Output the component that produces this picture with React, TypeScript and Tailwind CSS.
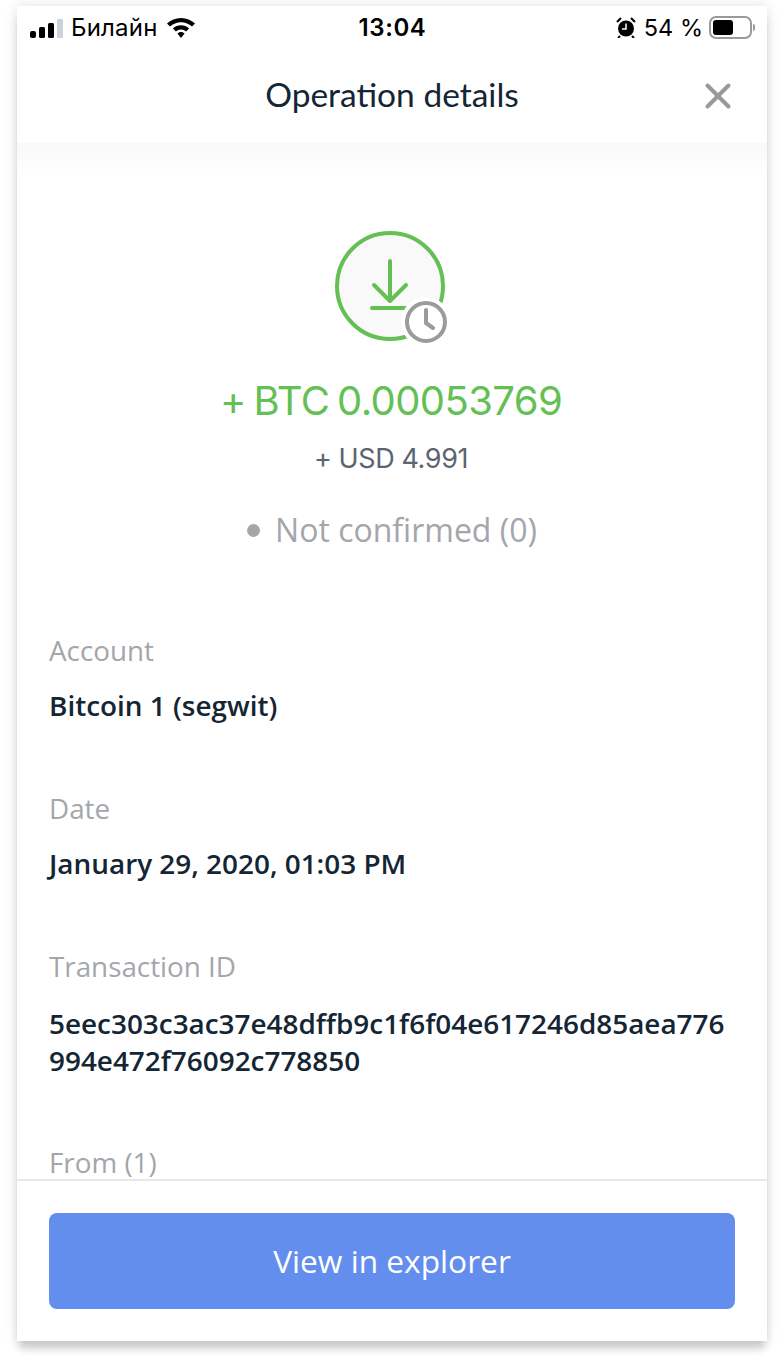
import { X } from "lucide-react";

const font = "font-['Open_Sans',sans-serif]";

function StatusBar() {
  return (
    <div className="flex h-[41px] items-center justify-between pl-[13px] pr-[12px] pt-[2px] font-['Inter',sans-serif] text-black">
      <div className="flex w-[240px] items-center">
        {/* signal */}
        <svg width="33" height="20" viewBox="0 0 33 20" className="mr-[8px]">
          <rect x="0" y="13" width="6" height="7" rx="2" fill="#000" />
          <rect x="9" y="9" width="6" height="11" rx="1.5" fill="#000" />
          <rect x="18" y="5" width="6" height="15" rx="1.5" fill="#000" />
          <rect x="27" y="1" width="6" height="19" rx="1" fill="#ccd2dc" />
        </svg>
        <span className="text-[24px] leading-none tracking-[0.2px]">Билайн</span>
        {/* wifi */}
        <svg width="30" height="23" viewBox="0 0 30 23" className="ml-[8px]">
          <path d="M15 2C9.5 2 4.700 4.100 1 7.600l3 3C7 7.900 10.800 6.300 15 6.300s8 1.600 11 4.300l3-3C25.300 4.100 20.500 2 15 2z" fill="#000" />
          <path d="M15 9.300c-3.100 0-6 1.200-8.100 3.200l3 3c1.300-1.200 3.100-2 5.100-2s3.800.8 5.100 2l3-3C21 10.500 18.100 9.300 15 9.300z" fill="#000" />
          <path d="M15 16c-1.400 0-2.700.6-3.600 1.500L15 22l3.600-4.500C17.700 16.600 16.400 16 15 16z" fill="#000" />
        </svg>
      </div>
      <span className="text-[24px] font-semibold leading-none tracking-[0.6px]">13:04</span>
      <div className="flex w-[240px] items-center justify-end">
        {/* alarm */}
        <svg width="20" height="21" viewBox="0 0 20 21" className="mr-[8px]">
          <circle cx="10" cy="11.500" r="8" fill="#000" />
          <path d="M10 6.500v5.500H6" stroke="#fff" strokeWidth="1.500" fill="none" />
          <path d="M1 5l4-4M19 5l-4-4M4 19l-2 2M16 19l2 2" stroke="#000" strokeWidth="2" />
        </svg>
        <span className="text-[23.5px] leading-none">54 %</span>
        {/* battery */}
        <div className="ml-[6px] flex items-center">
          <div className="flex h-[23px] w-[43px] items-center rounded-[7px] border-2 border-[#9a9a9a] p-[2px]">
            <div className="h-[15px] w-[20px] rounded-[3px] bg-black" />
          </div>
          <div className="ml-[1px] h-[7px] w-[2px] rounded-r-full bg-[#9a9a9a]" />
        </div>
      </div>
    </div>
  );
}

function Field({ label, value, gap, valueGap }: { label: string; value: string; gap: string; valueGap: string }) {
  return (
    <div className={gap}>
      <div className="text-[27.8px] leading-[37px] text-[#a3a6aa]">{label}</div>
      <div className={`${valueGap} break-all text-[27.9px] font-semibold leading-[37px] text-[#142533]`}>{value}</div>
    </div>
  );
}

export default function App() {
  return (
    <div className="h-[1368px] w-[784px] overflow-hidden bg-white pl-[17px] pr-[17px] pt-[6px]">
      <div className={`${font} flex h-[1335px] w-[750px] flex-col bg-white shadow-[0_0_12px_rgba(0,0,0,0.13),0_10px_8px_-2px_rgba(0,0,0,0.17)]`}>
        <StatusBar />

        <div className="relative flex h-[96px] shrink-0 items-center justify-center">
          <span className="font-['Lato',sans-serif] text-[33.5px] leading-none text-[#142533]">Operation details</span>
          <X className="absolute right-[28px] top-[28px] text-[#999999]" size={42} strokeWidth={4} absoluteStrokeWidth />
        </div>

        <div className="flex min-h-0 flex-1 flex-col bg-gradient-to-b from-[#f8f9f8] to-white to-[32px]">
          <div className="flex flex-col items-center pt-[88px]">
            {/* receive icon */}
            <svg width="116" height="116" viewBox="0 0 116 116" className="ml-[2px]">
              <circle cx="55" cy="55" r="53" fill="#f8f9f8" stroke="#64bf55" strokeWidth="4" />
              <path d="M55 30v40M39 54l16 16 16-16M37 77h36" stroke="#64bf55" strokeWidth="4" strokeLinecap="round" strokeLinejoin="round" fill="none" />
              <circle cx="91" cy="91" r="25" fill="#fff" />
              <circle cx="91" cy="91" r="19" fill="#fff" stroke="#9b9b9f" strokeWidth="4" />
              <path d="M91 79v13l7 5" stroke="#9b9b9f" strokeWidth="4" strokeLinecap="round" strokeLinejoin="round" fill="none" />
            </svg>
            <div className="mt-[31px] -translate-x-px font-['Inter',sans-serif] text-[40px] leading-[46px] tracking-[-0.6px] text-[#64bf55] [word-spacing:-3px]">+ BTC 0.00053769</div>
            <div className="mt-[19px] -translate-x-px font-['Inter',sans-serif] text-[27px] leading-[32px] tracking-[-0.4px] text-[#5a6570]">+ USD 4.991</div>
            <div className="mt-[35px] flex items-center text-[#a3a6aa]">
              <span className="mr-[15px] h-[13px] w-[13px] rounded-full bg-[#a3a6aa]" />
              <span className="text-[32px] leading-[40px]">Not confirmed (0)</span>
            </div>
          </div>

          <div className="px-[32px] pt-[82px]">
            <Field label="Account" value="Bitcoin 1 (segwit)" gap="" valueGap="mt-[18px]" />
            <Field label="Date" value="January 29, 2020, 01:03 PM" gap="mt-[66px]" valueGap="mt-[18px]" />
            <Field label="Transaction ID" value="5eec303c3ac37e48dffb9c1f6f04e617246d85aea776994e472f76092c778850" gap="mt-[66px]" valueGap="mt-[20px]" />
            <div className="mt-[67px] text-[27.8px] leading-[33px] text-[#a3a6aa]">From (1)</div>
          </div>
        </div>

        <div className="h-[162px] shrink-0 border-t-2 border-[#e8e8e8] bg-white px-[32px] pt-[32px]">
          <button className="flex h-[96px] w-full items-center justify-center rounded-[8px] bg-[#648eee] text-[31.7px] text-white">
            View in explorer
          </button>
        </div>
      </div>
    </div>
  );
}
